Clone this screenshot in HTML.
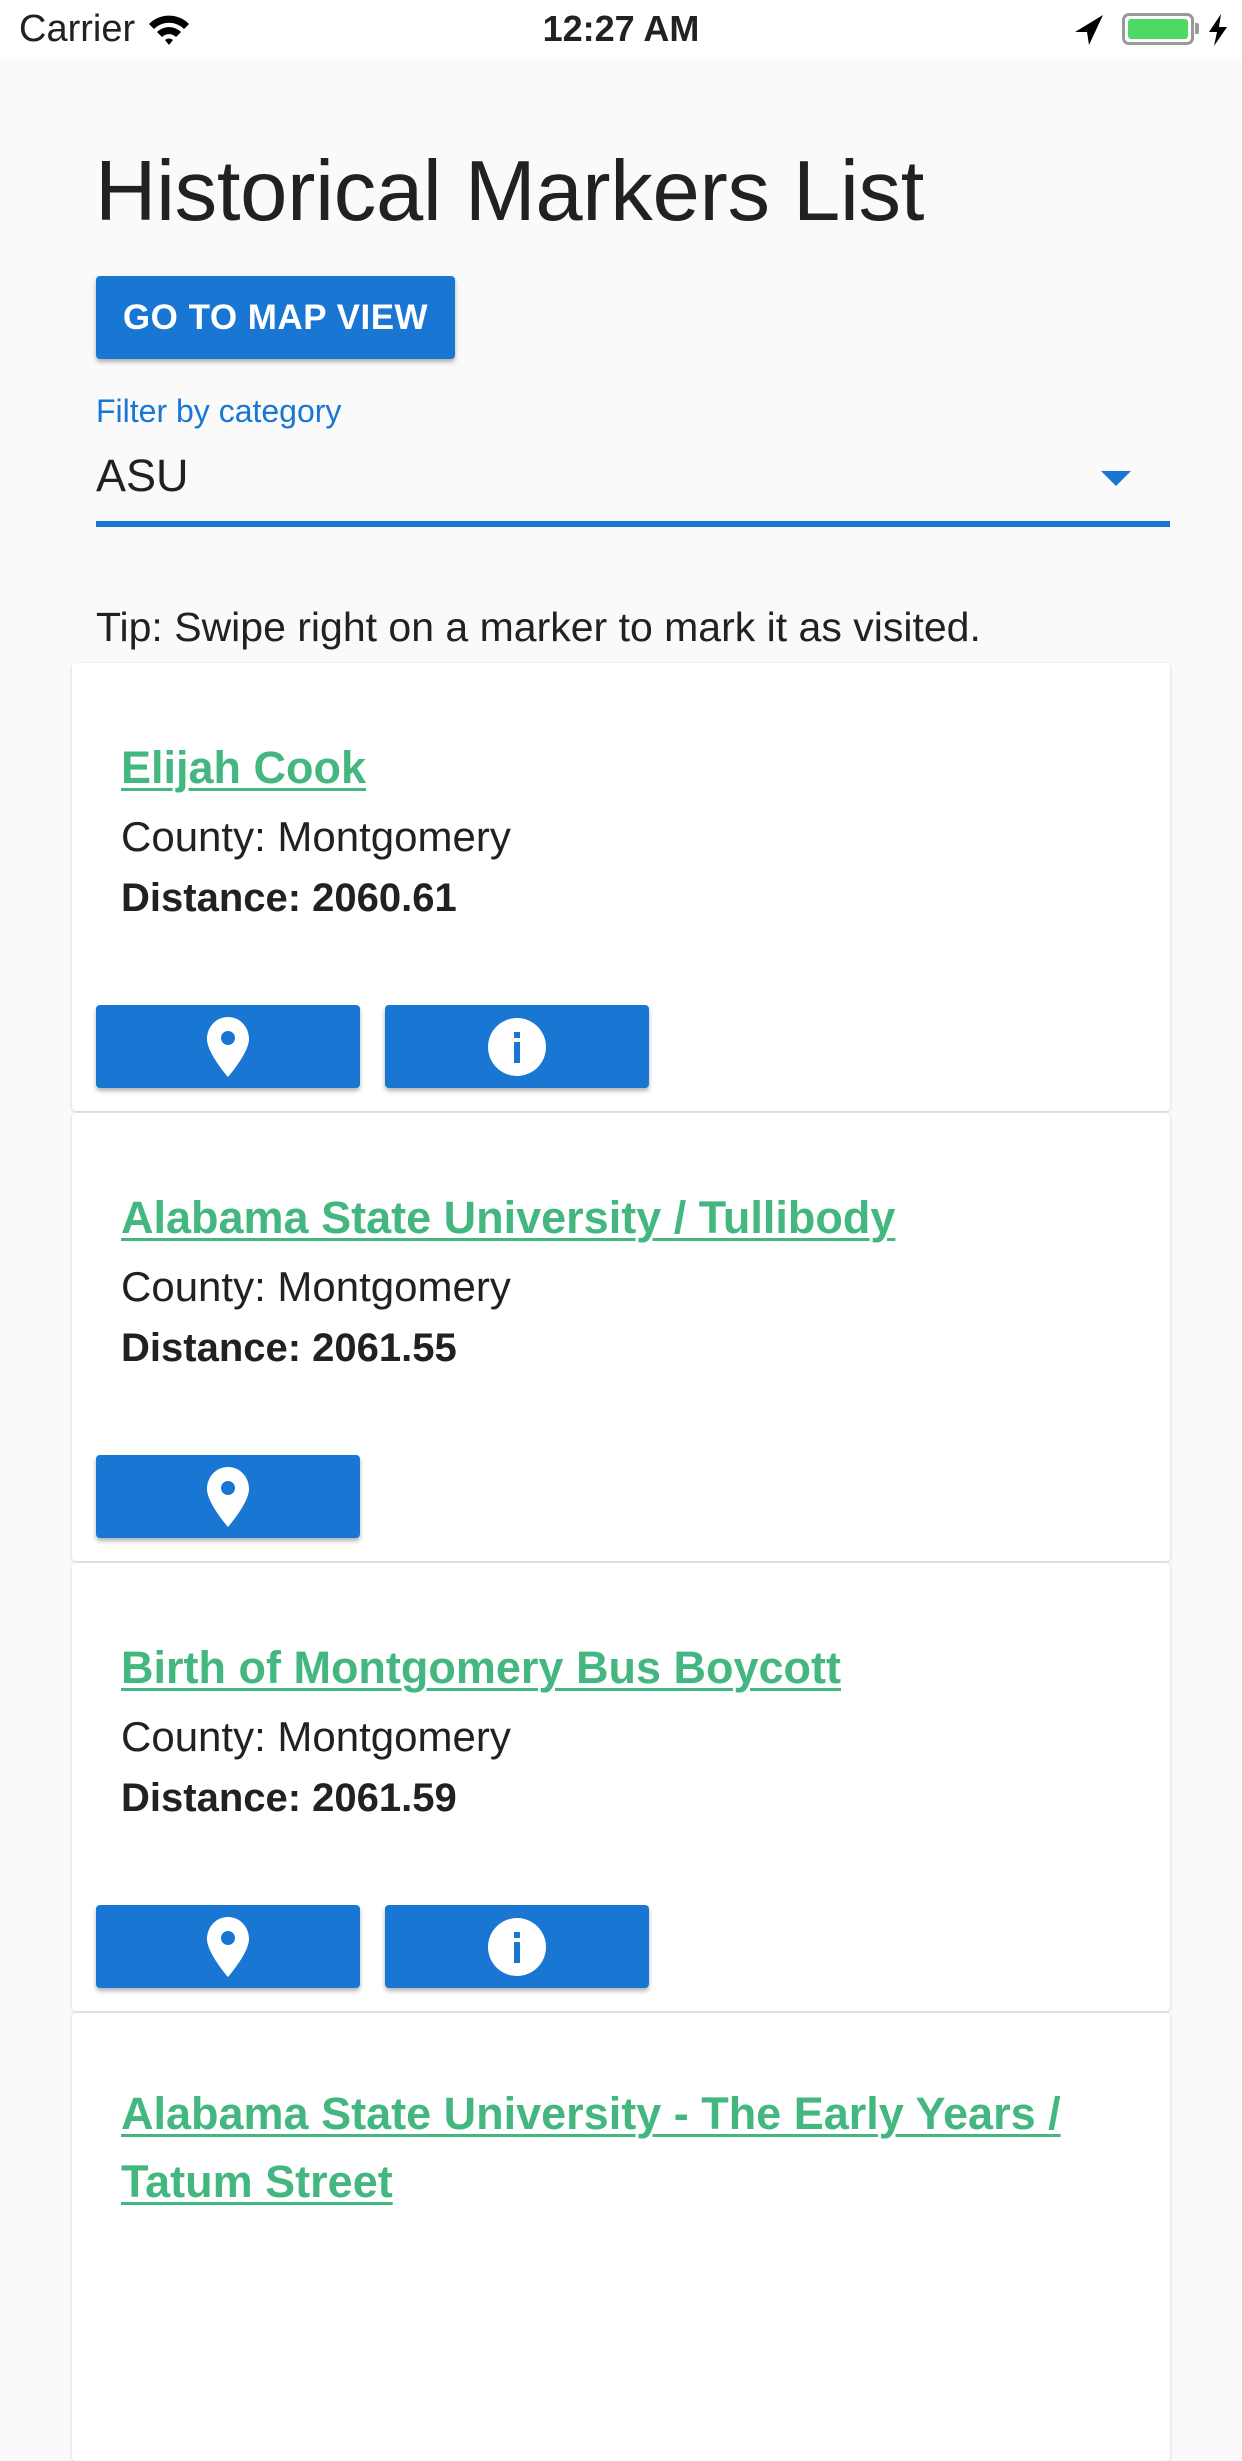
<!DOCTYPE html>
<html><head><meta charset="utf-8"><style>
*{margin:0;padding:0;box-sizing:border-box}
body{width:1242px;height:2208px;overflow:hidden;background:#fafafa;font-family:"Liberation Sans",sans-serif;color:#212121;position:relative}
.sb{position:absolute;left:0;top:0;width:1242px;height:59px;background:#fff}
.abs{position:absolute;white-space:nowrap}
.card{position:absolute;left:72px;width:1098px;height:448px;background:#fff;border-radius:4px;box-shadow:0 1px 3px rgba(0,0,0,.18)}
.t{position:absolute;left:49px;font-size:45px;font-weight:bold;color:#43b77f;text-decoration:underline;text-decoration-thickness:3px;text-underline-offset:5px;white-space:nowrap}
.c{position:absolute;left:49px;font-size:42px;white-space:nowrap}
.d{position:absolute;left:49px;font-size:40px;font-weight:bold;white-space:nowrap}
.btn{position:absolute;width:264px;height:83px;background:#1976d2;border-radius:4px;box-shadow:0 3px 5px rgba(0,0,0,.3);display:flex;align-items:center;justify-content:center}
</style></head><body>
<div class="sb"></div>
<div class="abs" style="left:19px;top:8px;font-size:38px">Carrier</div>
<svg class="abs" style="left:147px;top:14px" width="44" height="32" viewBox="0 0 44 32"><path d="M2 10 A28 28 0 0 1 42 10 L37 15 A21 21 0 0 0 7 15Z M10 18 A17 17 0 0 1 34 18 L29 23 A10 10 0 0 0 15 23Z M18 26 A6 6 0 0 1 26 26 L22 31Z" fill="#000"/></svg>
<div class="abs" style="left:0;width:1242px;text-align:center;top:8px;font-size:36px;font-weight:bold">12:27 AM</div>
<svg class="abs" style="left:1074px;top:14px" width="30" height="32" viewBox="0 0 30 32"><path d="M29 1 L1 18 L13 18 L15 31Z" fill="#000"/></svg>
<div class="abs" style="left:1122px;top:13px;width:72px;height:32px;border:3px solid #999;border-radius:7px;padding:3px"><div style="width:100%;height:100%;background:#4cd964;border-radius:3px"></div></div>
<div class="abs" style="left:1195px;top:23px;width:4px;height:11px;background:#999;border-radius:0 2px 2px 0"></div>
<svg class="abs" style="left:1207px;top:14px" width="22" height="32" viewBox="0 0 22 32"><path d="M14 0 L2 18 L10 18 L7 32 L20 13 L12 13Z" fill="#000"/></svg>

<div class="abs" style="left:95px;top:143px;font-size:85px;letter-spacing:-0.3px">Historical Markers List</div>
<div class="abs" style="left:96px;top:276px;width:359px;height:83px;background:#1976d2;border-radius:4px;box-shadow:0 3px 5px rgba(0,0,0,.3);color:#fff;font-size:35px;font-weight:bold;letter-spacing:0.5px;text-align:center;line-height:83px">GO TO MAP VIEW</div>
<div class="abs" style="left:96px;top:393px;font-size:32px;color:#1976d2">Filter by category</div>
<div class="abs" style="left:96px;top:450px;font-size:45px">ASU</div>
<svg class="abs" style="left:1101px;top:471px" width="30" height="15"><path d="M0 0H30L15 15Z" fill="#1976d2"/></svg>
<div class="abs" style="left:96px;top:521px;width:1074px;height:6px;background:#1976d2"></div>
<div class="abs" style="left:96px;top:604px;font-size:41px">Tip: Swipe right on a marker to mark it as visited.</div>

<div class="card" style="top:663px">
<div class="t" style="top:79px">Elijah Cook</div>
<div class="c" style="top:150px">County: Montgomery</div>
<div class="d" style="top:213px">Distance: 2060.61</div>
<div class="btn" style="left:24px;top:342px"><svg width="42" height="60" viewBox="0 0 42 60"><path d="M21 0C9 0 0 10 0 22C0 36 21 60 21 60C21 60 42 36 42 22C42 10 33 0 21 0Z M21 14A7 7 0 1 1 21 28A7 7 0 1 1 21 14Z" fill="#fff" fill-rule="evenodd"/></svg></div>
<div class="btn" style="left:313px;top:342px"><svg width="60" height="60" viewBox="0 0 60 60"><circle cx="30" cy="30" r="29" fill="#fff"/><rect x="27" y="15" width="6" height="6" fill="#1976d2"/><rect x="27" y="25" width="6" height="21" fill="#1976d2"/></svg></div>
</div>
<div class="card" style="top:1113px">
<div class="t" style="top:79px">Alabama State University / Tullibody</div>
<div class="c" style="top:150px">County: Montgomery</div>
<div class="d" style="top:213px">Distance: 2061.55</div>
<div class="btn" style="left:24px;top:342px"><svg width="42" height="60" viewBox="0 0 42 60"><path d="M21 0C9 0 0 10 0 22C0 36 21 60 21 60C21 60 42 36 42 22C42 10 33 0 21 0Z M21 14A7 7 0 1 1 21 28A7 7 0 1 1 21 14Z" fill="#fff" fill-rule="evenodd"/></svg></div>
</div>
<div class="card" style="top:1563px">
<div class="t" style="top:79px">Birth of Montgomery Bus Boycott</div>
<div class="c" style="top:150px">County: Montgomery</div>
<div class="d" style="top:213px">Distance: 2061.59</div>
<div class="btn" style="left:24px;top:342px"><svg width="42" height="60" viewBox="0 0 42 60"><path d="M21 0C9 0 0 10 0 22C0 36 21 60 21 60C21 60 42 36 42 22C42 10 33 0 21 0Z M21 14A7 7 0 1 1 21 28A7 7 0 1 1 21 14Z" fill="#fff" fill-rule="evenodd"/></svg></div>
<div class="btn" style="left:313px;top:342px"><svg width="60" height="60" viewBox="0 0 60 60"><circle cx="30" cy="30" r="29" fill="#fff"/><rect x="27" y="15" width="6" height="6" fill="#1976d2"/><rect x="27" y="25" width="6" height="21" fill="#1976d2"/></svg></div>
</div>
<div class="card" style="top:2013px">
<div class="t" style="line-height:68px;top:67px">Alabama State University - The Early Years /<br>Tatum Street</div>
</div>
</body></html>
